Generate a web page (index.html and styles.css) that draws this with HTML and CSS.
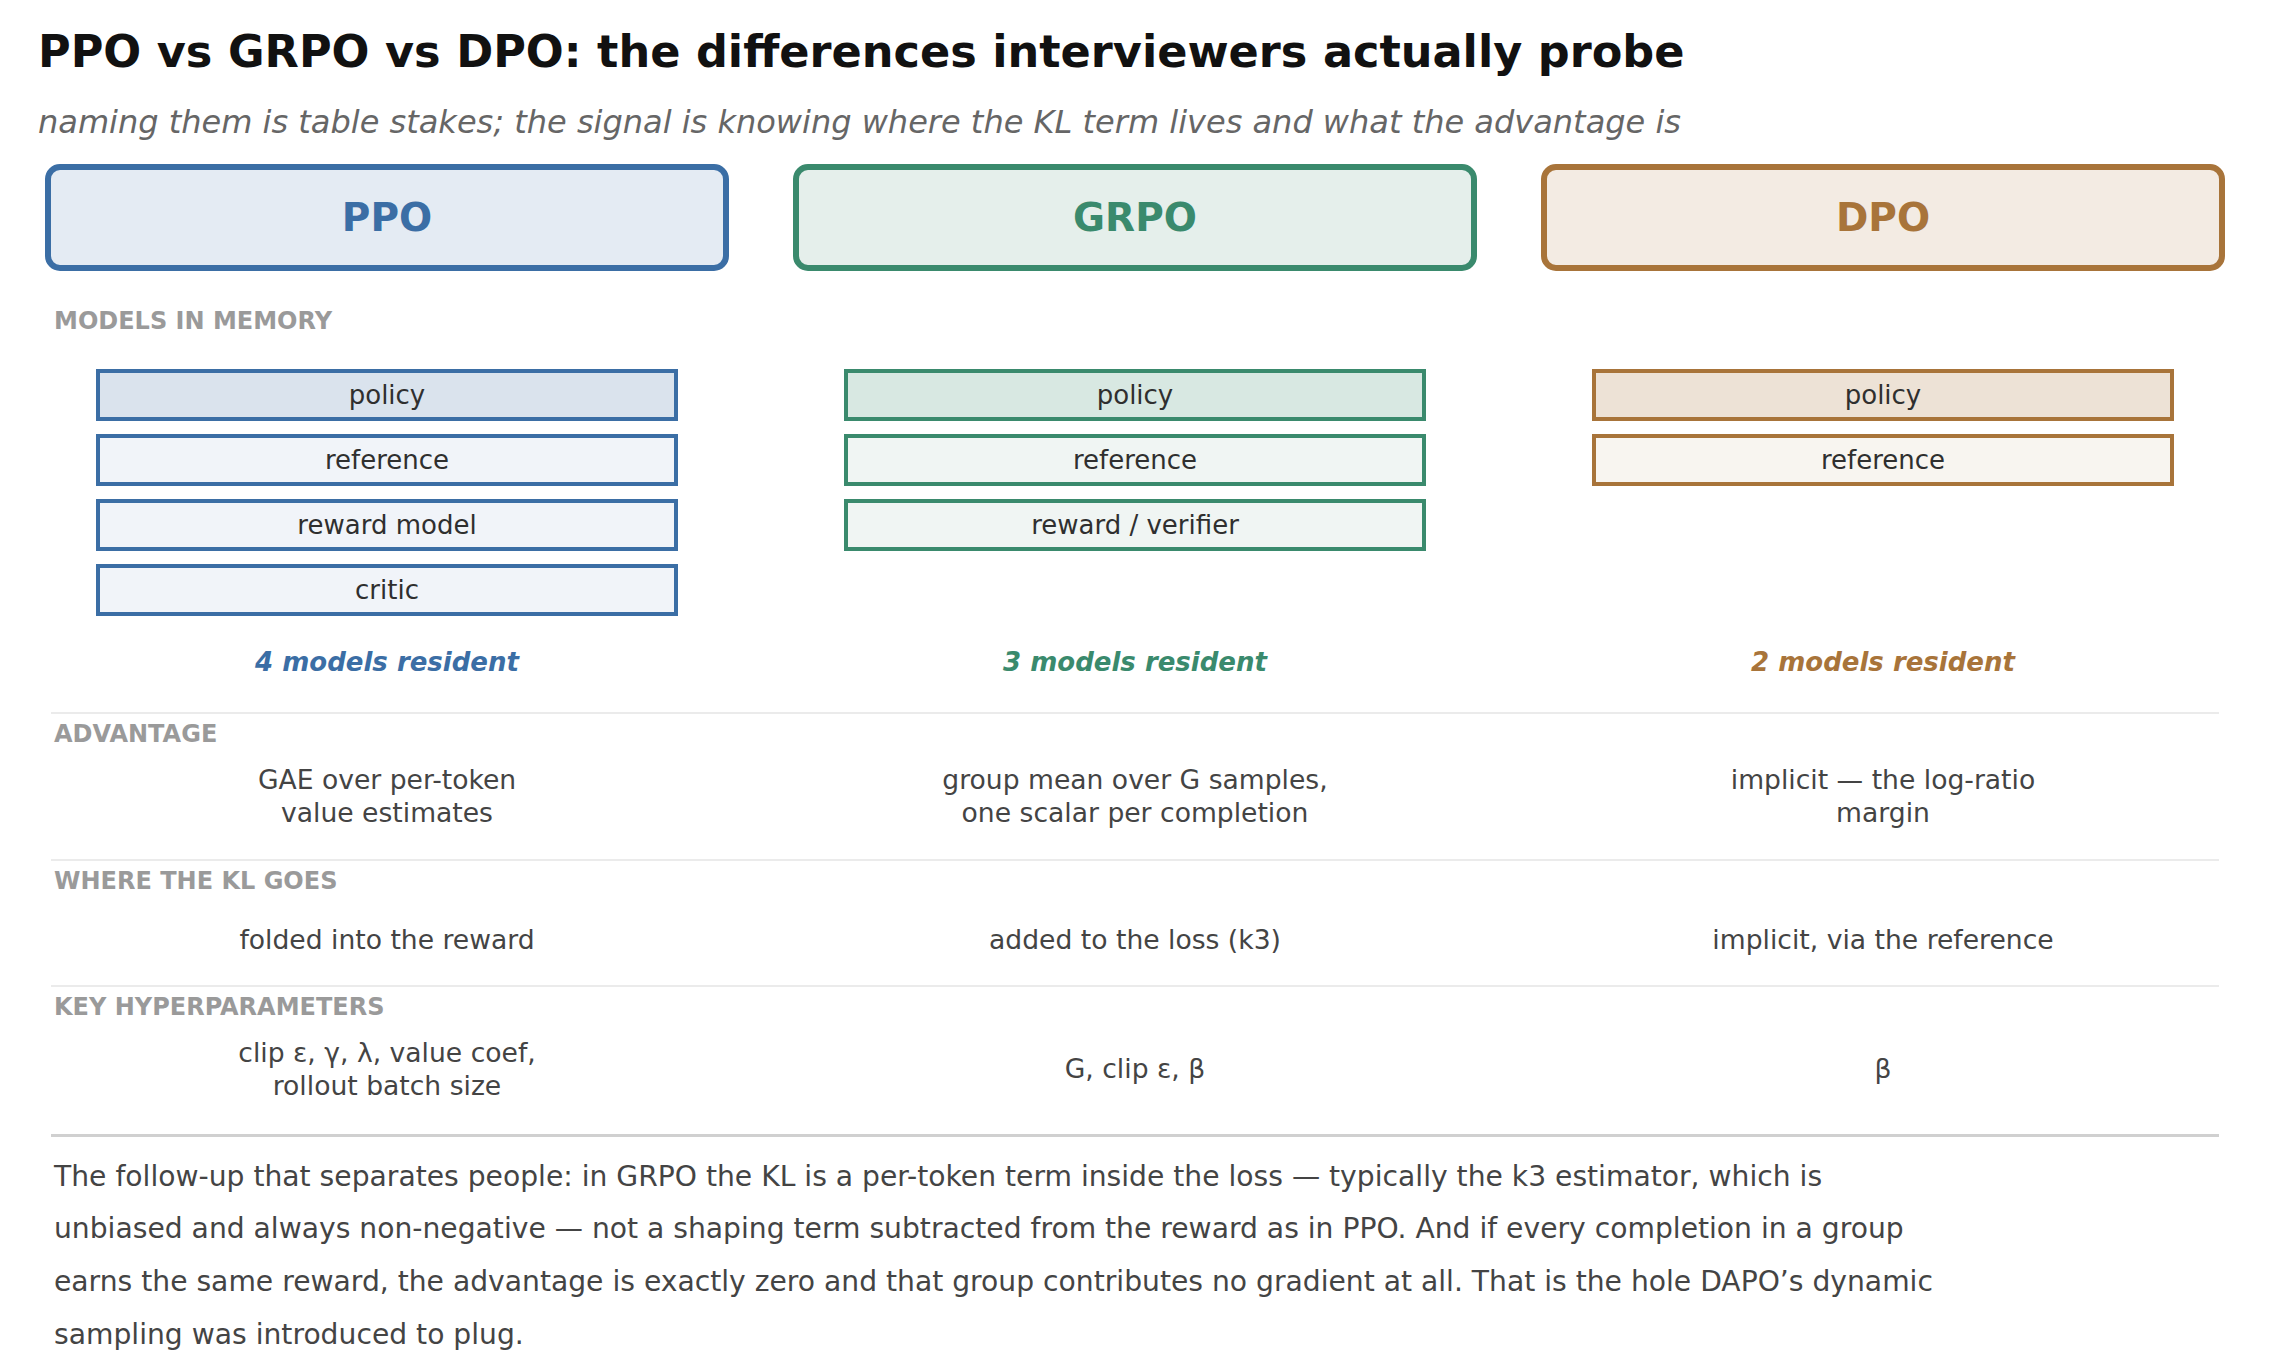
FILE: index.html
```html
<!DOCTYPE html>
<html lang="en">
<head>
<meta charset="utf-8">
<title>PPO vs GRPO vs DPO</title>
<link rel="stylesheet" href="styles.css">
</head>
<body>
<main class="page">
  <h1 class="title">PPO vs GRPO vs DPO: the differences interviewers actually probe</h1>
  <p class="subtitle">naming them is table stakes; the signal is knowing where the KL term lives and what the advantage is</p>

  <div class="cols heads">
    <div class="head ppo">PPO</div>
    <div class="head grpo">GRPO</div>
    <div class="head dpo">DPO</div>
  </div>

  <section class="section memory">
    <h2 class="label">MODELS IN MEMORY</h2>
    <div class="cols mem-cols">
      <div class="mem ppo">
        <ul class="stack">
          <li class="model model--main">policy</li>
          <li class="model">reference</li>
          <li class="model">reward model</li>
          <li class="model">critic</li>
        </ul>
        <p class="count">4 models resident</p>
      </div>
      <div class="mem grpo">
        <ul class="stack">
          <li class="model model--main">policy</li>
          <li class="model">reference</li>
          <li class="model">reward / verifier</li>
        </ul>
        <p class="count">3 models resident</p>
      </div>
      <div class="mem dpo">
        <ul class="stack">
          <li class="model model--main">policy</li>
          <li class="model">reference</li>
        </ul>
        <p class="count">2 models resident</p>
      </div>
    </div>
  </section>

  <section class="section row row--first">
    <h2 class="label">ADVANTAGE</h2>
    <div class="cols cells">
      <p class="cell">GAE over per-token<br>value estimates</p>
      <p class="cell">group mean over G samples,<br>one scalar per completion</p>
      <p class="cell">implicit — the log-ratio<br>margin</p>
    </div>
  </section>

  <section class="section row row--single">
    <h2 class="label">WHERE THE KL GOES</h2>
    <div class="cols cells">
      <p class="cell">folded into the reward</p>
      <p class="cell">added to the loss (k3)</p>
      <p class="cell">implicit, via the reference</p>
    </div>
  </section>

  <section class="section row row--last">
    <h2 class="label">KEY HYPERPARAMETERS</h2>
    <div class="cols cells">
      <p class="cell">clip ε, γ, λ, value coef,<br>rollout batch size</p>
      <p class="cell">G, clip ε, β</p>
      <p class="cell">β</p>
    </div>
  </section>

  <p class="note">The follow-up that separates people: in GRPO the KL is a per-token term inside the loss — typically the k3 estimator, which is unbiased and always non-negative — not a shaping term subtracted from the reward as in PPO. And if every completion in a group earns the same reward, the advantage is exactly zero and that group contributes no gradient at all. That is the hole DAPO’s dynamic sampling was introduced to plug.</p>
</main>
</body>
</html>
```

FILE: styles.css
```css
* { box-sizing: border-box; }

html, body {
  margin: 0;
  padding: 0;
  background: #ffffff;
}

body {
  font-family: "DejaVu Sans", "Liberation Sans", sans-serif;
  color: #333333;
}

.page {
  width: 2272px;
  padding: 26px 47px 0 38px;
}

.title {
  margin: 0;
  font-size: 44.6px;
  line-height: 52px;
  font-weight: 700;
  color: #111111;
}

.subtitle {
  margin: 24px 0 0;
  font-size: 32px;
  line-height: 40px;
  font-style: italic;
  color: #666666;
}

.cols {
  display: grid;
  grid-template-columns: repeat(3, 684px);
  column-gap: 64px;
}

/* colour themes */
.ppo  { --c: #3b6ea5; --head-bg: #e4ebf3; --main-bg: #dae3ed; --box-bg: #f1f4f9; }
.grpo { --c: #3a8a6d; --head-bg: #e5efeb; --main-bg: #d8e8e2; --box-bg: #f0f5f3; }
.dpo  { --c: #a8743a; --head-bg: #f3ebe3; --main-bg: #ede2d6; --box-bg: #f8f5f0; }

.heads {
  margin: 22px 0 0 7px;
}

.head {
  height: 107px;
  border: 6px solid var(--c);
  border-radius: 15px;
  background: var(--head-bg);
  color: var(--c);
  display: flex;
  align-items: center;
  justify-content: center;
  font-size: 39px;
  font-weight: 700;
}

.section {
  margin: 0 6px 0 13px;
}

.section .cols {
  margin: 0 -6px;
}

.label {
  margin: 0;
  padding-left: 3px;
  font-size: 24px;
  line-height: 28px;
  font-weight: 700;
  color: #9a9a9a;
}

.memory {
  margin-top: 36px;
}

.section .mem-cols {
  margin-top: 34px;
}

.mem {
  display: flex;
  flex-direction: column;
  align-items: center;
}

.stack {
  list-style: none;
  margin: 0;
  padding: 0;
  width: 582px;
  flex: 1;
  display: flex;
  flex-direction: column;
  gap: 13px;
}

.model {
  height: 52px;
  border: 4px solid var(--c);
  background: var(--box-bg);
  font-size: 26px;
  line-height: 44px;
  text-align: center;
  color: #2f2f2f;
}

.model--main {
  background: var(--main-bg);
}

.count {
  margin: 30px 0 0;
  font-size: 26px;
  line-height: 32px;
  font-weight: 700;
  font-style: italic;
  color: var(--c);
  text-align: center;
}

.row {
  border-top: 2px solid #ebebeb;
}

.row .label {
  padding-top: 6px;
}

.row--first {
  margin-top: 34px;
}

.cells {
  align-items: center;
  padding: 14.5px 0 30px;
}

.cell {
  margin: 0;
  font-size: 26.6px;
  line-height: 33px;
  text-align: center;
  color: #444444;
}

.row--single .cells {
  padding: 28.5px 0 29px;
}

.row--last {
  border-bottom: 3px solid #d0d0d0;
}

.row--last .cells {
  padding-bottom: 32px;
}

.note {
  margin: 14px 0 0 16px;
  max-width: 1895px;
  font-size: 28.2px;
  line-height: 52.7px;
  color: #444444;
}
```
